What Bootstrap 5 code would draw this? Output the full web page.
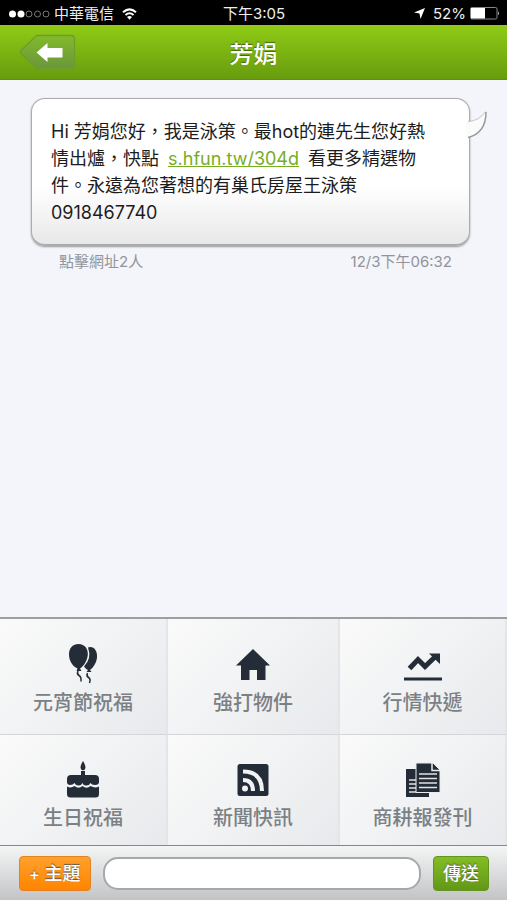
<!DOCTYPE html>
<html lang="zh-Hant">
<head>
<meta charset="utf-8">
<meta name="viewport" content="width=device-width, initial-scale=1">
<title>芳娟</title>
<link href="https://cdn.jsdelivr.net/npm/bootstrap@5.3.0/dist/css/bootstrap.min.css" rel="stylesheet">
<style>
body { font-family: Inter, "Noto Sans CJK TC", sans-serif; background: #f3f5fa; }
.status { height: 25px; font-size: 15px; line-height: 25px; padding: 1px 7px 0 8px; background: #000; color: #eee; display: grid; grid-template-columns: 1fr auto 1fr; }
.topbar { height: 55px; background: linear-gradient(#90cb16, #679c0d); border-bottom: 1px solid #5f930f; display: grid; grid-template-columns: 1fr auto 1fr; }
.topbar h1 { font-size: 24px; font-weight: 500; line-height: 32px; padding-top: 5px; color: #fff; text-shadow: 0 -1px 1px #42660c; }
.back-btn { margin-left: 19px; }
.bubble { margin: 18px 37px 0 31px; padding: 19px 30px 18px 19px; border: 1px solid #a9abae; border-bottom-width: 2px; border-radius: 14px; background: linear-gradient(#fff 60%, #e8e8e8); box-shadow: 0 1px 2px #999; font-size: 18px; line-height: 27px; color: #1c1c1c; }
.bubble a { color: #76ad25; margin: 0 4px; }
.bubble-tail { right: -19px; top: 11px; }
.meta { margin: 4px 55px 0 59px; font-size: 15px; line-height: 24px; color: #929499; }
.tiles { display: grid; grid-template-columns: 168fr 172fr 167fr; grid-template-rows: 116px 110px; border-top: 2px solid #9c9ea1; border-bottom: 1px solid #85878a; }
.tile { border: 0; border-right: 2px solid #e3e5e8; border-bottom: 1px solid #d3d5d8; background: linear-gradient(135deg, #fafafa, #f2f3f4 45%, #e8e9ec); color: #7b8084; font-size: 20px; font-weight: 500; line-height: 28px; padding: 24px 0 0; }
.tile:nth-child(n+4) { border-bottom: 0; padding-top: 23px; }
.tile svg { color: #242c38; margin-bottom: 2px; }
.composer { height: 54px; background: linear-gradient(#f4f5f5, #c2c4c6); padding: 0 18px 0 19px; gap: 12px; }
.composer .form-control { height: 33px; border: 2px solid #a6a8aa; border-radius: 15px; background: #fff; }
.act { height: 35px; padding: 0 9px; border-radius: 4px; color: #fff; font-size: 18px; font-weight: 500; line-height: 33px; white-space: nowrap; text-shadow: 0 -1px 1px #555; }
.act-topic { border: 1px solid #e38220; background: linear-gradient(#ffa02c, #ff8500); }
.act-topic small { font-size: 16px; }
.act-send { border: 1px solid #659322; background: linear-gradient(#83bd25, #629717); }
</style>
<script src="https://cdn.jsdelivr.net/npm/bootstrap@5.3.0/dist/js/bootstrap.bundle.min.js"></script>
</head>
<body class="d-flex flex-column min-vh-100">
<div class="status">
  <div class="d-flex align-items-center">
    <svg width="42" height="12" viewBox="0 0 42 12" fill="#fff" stroke="none" aria-hidden="true"><circle cx="4.500" cy="6" r="3.500"/><circle cx="13" cy="6" r="3.500"/><g fill="none" stroke="#777"><circle cx="21" cy="6" r="3"/><circle cx="29.500" cy="6" r="3"/><circle cx="38" cy="6" r="3"/></g></svg>
    <span class="ms-1">中華電信</span>
    <svg class="ms-2" width="15" height="12" viewBox="0 0 15 12" fill="none" stroke="#fff" stroke-width="2" aria-hidden="true"><path d="M1 4.300Q7.500-1.500 14 4.300M3.500 7Q7.500 3.500 11.500 7"/><path d="M5 9Q7.500 7 10 9L7.500 11.800Z" fill="#fff" stroke="none"/></svg>
  </div>
  <div>下午3:05</div>
  <div class="d-flex align-items-center justify-content-end">
    <svg class="me-2" width="11" height="11" viewBox="0 0 11 11" fill="#fff" aria-hidden="true"><path d="M11 0 6.500 11 5.500 5.500 0 4.500Z"/></svg>
    <span>52%</span>
    <svg class="ms-1" width="30" height="13" viewBox="0 0 30 13" aria-hidden="true"><rect x=".5" y=".5" width="26.500" height="11.500" rx="1.500" fill="none" stroke="#888"/><path fill="#fff" d="M1 1h14v10.500H1z"/><path fill="#bbb" d="M28 4.300Q30 6.300 28 8.300Z"/></svg>
  </div>
</div>
<header class="topbar align-items-center">
  <button class="back-btn btn p-0 border-0 lh-1 text-start" type="button" aria-label="返回">
    <svg width="57" height="37" viewBox="0 0 57 37"><defs><linearGradient id="bk" x2="0" y2="1"><stop stop-color="#82ba2b"/><stop offset="1" stop-color="#6b963b"/></linearGradient></defs><path d="M16 3Q17 1.500 19 1.500H52Q55.500 1.500 55.500 5V31Q55.500 34.500 52 34.500H19Q17 34.500 16 33L1.500 19Q.8 18 1.500 17Z" fill="url(#bk)" stroke="#6f9c2d" stroke-width="1.300"/><path d="M17.500 18.500 28.500 9v5H43.500v9.500H28.500V28Z" fill="#fff"/></svg>
  </button>
  <h1 class="m-0">芳娟</h1>
</header>
<main class="flex-grow-1">
  <div class="bubble position-relative">Hi 芳娟您好，我是泳策。最hot的連先生您好熱情出爐，快點 <a href="#">s.hfun.tw/304d</a> 看更多精選物件。永遠為您著想的有巢氏房屋王泳策 0918467740
    <svg class="bubble-tail position-absolute" width="22" height="30" viewBox="0 0 22 30" aria-hidden="true"><path d="M0 12Q14 12 20 2Q19 24 0 28Z" fill="#fbfbfb"/><path d="M2 11.500Q13 11 19.500 1.500" fill="none" stroke="#c5c7ca"/><path d="M20 2Q20 23 2 27.500" fill="none" stroke="#96999d" stroke-width="1.500"/></svg>
  </div>
  <div class="meta d-flex justify-content-between"><span>點擊網址2人</span><span>12/3下午06:32</span></div>
</main>
<nav class="tiles">
  <button class="tile d-flex flex-column align-items-center" type="button">
    <svg width="44" height="44" viewBox="0 0 44 44" fill="currentColor"><path d="M29 4C34 4 36.500 9 36 14.500C35.500 20 32 25 29 27L30.500 29H25.500L27 27Q24.500 26 23 23.500Q31 15 27 4.500Z"/><path d="M17.500 1C24 1 27.300 6 26.800 12C26 19 22 23.500 19 25.500L20.500 28H15.500L16.500 25.500C12 23.500 8 18 8 11.500C8 5 12 1 17.500 1Z"/><path d="M17 28Q15.500 31 18 32.500T20 38.500M26.500 30Q25 33 27.500 34.500T28.500 40" fill="none" stroke="currentColor" stroke-width="1.500"/></svg>
    <span>元宵節祝福</span>
  </button>
  <button class="tile d-flex flex-column align-items-center" type="button">
    <svg width="44" height="44" viewBox="0 0 44 44" fill="currentColor"><path d="M22 6 39 22.500H34.500V37H26V27H18.500V37H10V22.500H5Z"/></svg>
    <span>強打物件</span>
  </button>
  <button class="tile d-flex flex-column align-items-center" type="button">
    <svg width="44" height="44" viewBox="0 0 44 44" fill="currentColor"><path d="M3 34.500H41V37.500H3Z"/><path d="M8.500 25.500 17 16.500 24 23.500 35 13" fill="none" stroke="currentColor" stroke-width="5"/><path d="M28 10.500H39V21Z"/></svg>
    <span>行情快遞</span>
  </button>
  <button class="tile d-flex flex-column align-items-center" type="button">
    <svg width="44" height="44" viewBox="0 0 44 44" fill="currentColor"><path d="M22 3Q27 11 22 12.500Q17 11 22 3ZM20 13H24V17H34Q38 17 38 21V24Q38 27 34 27Q30.500 27 29.500 25Q28 28 24.500 27.500Q22 27 21.500 25Q20 28 17 27.500Q14.500 27 13.500 25Q12 27 9 27Q6 26.500 6 24V21Q6 17 10 17H20Z"/><path d="M6 28.500Q10 30.500 13.500 28Q17.500 31.500 21.500 28Q25.500 31.500 29.500 28Q34 30.500 38 28.500V36Q38 39.500 34.500 39.500H9.500Q6 39.500 6 36Z"/></svg>
    <span>生日祝福</span>
  </button>
  <button class="tile d-flex flex-column align-items-center" type="button">
    <svg width="44" height="44" viewBox="0 0 44 44" fill="currentColor"><rect x="6.500" y="6" width="31" height="32" rx="2.500"/><g fill="none" stroke="#f1f2f4" stroke-width="4"><path d="M12 22Q22 22 22 33M12 13.500Q31 13.500 31 33"/></g><circle cx="14" cy="30.500" r="3" fill="#f1f2f4"/></svg>
    <span>新聞快訊</span>
  </button>
  <button class="tile d-flex flex-column align-items-center" type="button">
    <svg width="44" height="44" viewBox="0 0 44 44" fill="currentColor"><path d="M5 11H28V39H5Z"/><path d="M8 22H15M8 26H15M8 30H15M8 34H24" stroke="#dfe2e5" stroke-width="1.300"/><path d="M15 5H32L39 12V34.500H15Z" stroke="#e9ebed"/><path d="M31 5V12.500H39" fill="none" stroke="#e9ebed" stroke-width="1.500"/><path d="M18 16H36M18 20.500H36M18 25H36M18 29.500H36" stroke="#dfe2e5" stroke-width="1.300"/></svg>
    <span>商耕報發刊</span>
  </button>
</nav>
<form class="composer d-flex align-items-center">
  <button class="act act-topic" type="button"><small>+</small> 主題</button>
  <input class="form-control flex-fill" type="text" aria-label="訊息">
  <button class="act act-send" type="button">傳送</button>
</form>
</body>
</html>
